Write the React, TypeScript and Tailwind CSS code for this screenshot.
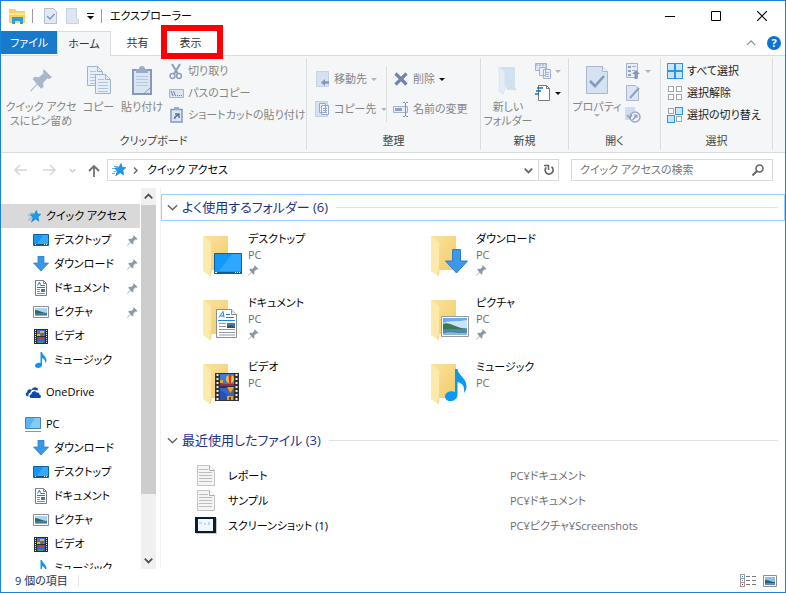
import React from "react";

type Kids = { children?: React.ReactNode };

function Svg({ w, h, crisp, children }: Kids & { w: number; h: number; crisp?: boolean }) {
  return (
    <svg
      width={w}
      height={h}
      viewBox={`0 0 ${w} ${h}`}
      fill="none"
      className="shrink-0"
      shapeRendering={crisp ? "crispEdges" : undefined}
      aria-hidden="true"
    >
      {children}
    </svg>
  );
}

/* ---------- small glyphs ---------- */

const Caret = ({ color = "#b4b4b4" }: { color?: string }) => (
  <Svg w={6} h={3}>
    <path d="M0 0h6L3 3z" fill={color} />
  </Svg>
);

const Chevron = ({ dir, color = "#606060", size = 11 }: { dir: "down" | "up" | "right"; color?: string; size?: number }) => (
  <svg width={size} height={size} viewBox="0 0 12 12" fill="none" stroke={color} strokeWidth={size < 10 ? 2.4 : 1.4} className="shrink-0" aria-hidden="true">
    <path d={dir === "down" ? "M1 3.500l5 5 5-5" : dir === "up" ? "M1 8.500l5-5 5 5" : "M3.500 1l5 5-5 5"} />
  </svg>
);

const Pin = ({ size = 11, color = "#8a98a3" }: { size?: number; color?: string }) => (
  <svg width={size} height={size} viewBox="0 0 22 22" fill={color} className="shrink-0" aria-hidden="true">
    <path d="M13 0l8 8-2.500 1.500-2-.5-4 4.500.5 3.500-2 2-4-4L1 21.500 0 21l6.500-7L2.500 9.500l2-2 4 .5 4.500-4-.5-1.500z" />
  </svg>
);

const Star = ({ s = 13 }: { s?: number }) => (
  <svg width={s} height={s} viewBox="0 0 14 14" className="shrink-0" aria-hidden="true">
    <path d="M2 3.500h4M0 5.500h3M1.500 8.500h3M0 10.500h3" stroke="#6bb3df" />
    <path d="M9 .5l1.200 3.700 3.600.5-3 2.600.9 4.700-3.400-2.300-4.600 3.100 1.700-4.500L2.800 5l4-.5z" fill="#1c9be8" stroke="#0c73bd" strokeWidth=".6" />
  </svg>
);

/* ---------- location icons ---------- */

function DesktopArt() {
  return (
    <>
      <path d="M.5.5h15v11H.5z" fill="#1496f5" stroke="#0b62a8" />
      <path d="M10 1h5v9H4z" fill="#35a9fb" />
      <path d="M1 10.500h14" stroke="#0b4f8c" />
      <path d="M2 10.500h1M11 10.500h1M13 10.500h1" stroke="#fff" />
    </>
  );
}
function DocArt() {
  return (
    <>
      <path d="M.5.5h8l3 3v12H.5z" fill="#fff" stroke="#777f86" />
      <path d="M8.500.5v3h3" stroke="#777f86" />
      <path d="M2.500 5.500L4.500 2l1 3.500M6 5.500h4M2 7.500h8" stroke="#1b83cf" />
      <path d="M2 9.500h3M2 11.500h3M2 13.500h8" stroke="#8a9299" />
      <path d="M6 9h4v3H6z" fill="#3c7daf" />
    </>
  );
}
function PictureArt() {
  return (
    <>
      <path d="M.5.5h15v11H.5z" fill="#fff" stroke="#8d8d8d" />
      <path d="M2 2h12v8H2z" fill="#a9d3f7" />
      <path d="M2 4c4 0 7 3 12 3v1H2z" fill="#31684f" />
      <path d="M2 7h12v3H2z" fill="#3e7aa3" />
      <path d="M2 9h12v1H2z" fill="#7fb0cf" />
    </>
  );
}
function VideoArt() {
  return (
    <>
      <path d="M0 0h14v15H0z" fill="#2b2b2b" />
      <path d="M3 1h8v6H3z" fill="#3d78dd" />
      <path d="M3 8h8v6H3z" fill="#3263c9" />
      <path d="M6 2h4v2H6zM3 5h3v2H3z" fill="#f0b429" />
      <path d="M7 4h2v2H7zM6 9h3v2H6z" fill="#d63a2c" />
      <path d="M4 12h5v2H4z" fill="#3f9c45" />
      <path d="M1.500 1v13M12.500 1v13" stroke="#e9e9e9" strokeDasharray="1 1" />
    </>
  );
}
const NOTE = "M5.500 0h1.500c.2 3 4.500 4.500 4.500 8.500-.2 1.500-.6 2.300-1.200 3 .3-2.500-.8-4.700-3.300-5.500v7c0 3.500-7 4-7 .8C0 11.500 3 10 5.500 11z";
const ARROW = "M5 0h6v7h4.500L8 15 .5 7H5z";

const icons: Record<string, React.ReactNode> = {
  desktop: <Svg w={16} h={12}><DesktopArt /></Svg>,
  download: <Svg w={16} h={16}><path d={ARROW} fill="#3c96e6" stroke="#2a78c4" strokeWidth=".7" /></Svg>,
  document: <Svg w={12} h={16}><DocArt /></Svg>,
  picture: <Svg w={16} h={12}><PictureArt /></Svg>,
  video: <Svg w={14} h={15}><VideoArt /></Svg>,
  music: <Svg w={12} h={16}><path d={NOTE} fill="#0d95f2" /></Svg>,
  star: <Star />,
  onedrive: (
    <Svg w={16} h={11}>
      <path d="M3.500 9.500C.5 9.500-.2 6.500 2 5.200 2.200 2.500 5 1.500 6.500 2.800 8-1 13-.5 13.200 3.200H10C7.500 2 5.500 4 5.500 5.500 3.500 6 3 8 3.500 9.500z" fill="#0a4aa8" />
      <path d="M6.500 11C4 11 3.800 7.500 6.500 7.200 6.500 4 10.500 3.300 11.700 5.700 13.500 5 14.800 6.500 14.400 7.800 16.500 8 16.500 11 14.400 11z" fill="#0a4aa8" />
    </Svg>
  ),
  pc: (
    <Svg w={16} h={16}>
      <path d="M.5 1.500h15v11H.5z" fill="#55b8f2" stroke="#4a86a8" />
      <path d="M10 2h5v10H4z" fill="#7fcdf8" />
      <path d="M0 15.500h16" stroke="#7e9bb0" />
    </Svg>
  ),
};

/* ---------- large folders ---------- */

const overlays: Record<string, React.ReactNode> = {
  desktop: (
    <>
      <path d="M12.500 19.500h27v20h-27z" fill="#1199fa" stroke="#0d5f9f" />
      <path d="M30 20h9v17H17z" fill="#2ea8fd" />
      <path d="M13 38.500h26" stroke="#0b5794" />
      <path d="M13 38.500h2M33 38.500h1M35 38.500h1M37 38.500h1" stroke="#fff" />
    </>
  ),
  download: <path d="M22.500 15.500h8V27h7L26.500 39 15.500 27h7z" fill="#3d98e8" stroke="#2c7ecb" />,
  document: (
    <>
      <path d="M14.500 11.500h15l5 5v23h-20z" fill="#fff" stroke="#8a8f94" />
      <path d="M29.500 11.500v5h5" fill="#e8e8e8" stroke="#8a8f94" />
      <path d="M17 19.500l4-6 1 6M18.500 18h3M24 16.500h4M24 19.500h8M16 22.500h17" stroke="#1b87d6" />
      <path d="M17 25.500h7M17 28.500h7M17 31.500h16M17 34.500h16M17 37h16" stroke="#93999f" />
      <path d="M25 25h8v5h-8z" fill="#3c7dae" />
      <path d="M25 28l4-1 4 2v1h-8z" fill="#2d5b4a" />
    </>
  ),
  picture: (
    <>
      <path d="M11.500 18.500h27v20h-27z" fill="#fff" stroke="#999" />
      <path d="M13 20h24v17H13z" fill="#69abf5" />
      <path d="M13 25c8-3 14-1 24-3v8H13z" fill="#cde5fa" />
      <path d="M13 26c6-3 12 4 24 5v1H13z" fill="#3c7853" />
      <path d="M13 31h24v6H13z" fill="#4987ae" />
      <path d="M13 35.500c8-3 15 1 24-1V37H13z" fill="#8bb9d4" />
    </>
  ),
  video: (
    <>
      <path d="M13 11h24v28H13z" fill="#333" />
      <path d="M18 12h14v12H18z" fill="#3d7be0" />
      <path d="M18 26h14v12H18z" fill="#2f66cf" />
      <circle cx="28" cy="17" r="4" fill="#f4c22b" />
      <path d="M26.500 13h3l-.5 8h-2zM28 26l4 4h-7z" fill="#d8352a" />
      <path d="M25 25h7l-3.500 6zM25 34h6v4h-6zM18 18h3v3h-3z" fill="#e9a52b" />
      <path d="M18 21l5 1 9 0v2H18zM27 35h2v3h-2z" fill="#8b2f5c" />
      <path d="M18 29c3-1 4 3 7 3v6h-7z" fill="#2751b5" />
      <path d="M15.500 12v26M34.500 12v26" stroke="#f0f0f0" strokeWidth="2" strokeDasharray="2 2" />
    </>
  ),
  music: <path d="M25 7h2.500c.5 6 9 9 9 17 0 3-.8 5-2.500 7 1-7-2-10-6.500-11v13c0 7-12.500 8.500-12.500 1.500 0-4 5.500-6.500 10-4.500z" fill="#0a99f5" />,
};

function FolderIcon({ kind }: { kind: string }) {
  return (
    <Svg w={42} h={44}>
      <defs>
        <linearGradient id={"fb" + kind} x1="0" y1="0" x2="1" y2="1">
          <stop offset="0" stopColor="#fbe3a0" />
          <stop offset="1" stopColor="#f1cb68" />
        </linearGradient>
      </defs>
      <path d="M1 2h25v34H9z" fill={`url(#fb${kind})`} />
      <path d="M1 2l8 6v30l-1 4-7-5z" fill="#fde9a9" />
      <path d="M8 42l1-4v-3" stroke="#f3d688" />
      {overlays[kind]}
    </Svg>
  );
}

/* ---------- ribbon drawings ---------- */

const PageBig = ({ check }: { check?: boolean }) => (
  <Svg w={22} h={28}>
    <path d="M.5.5h16l5 5v22H.5z" fill="#d5e2f1" stroke="#a9b8d0" />
    <path d="M16.500.5v5h5" fill="#eef3f9" stroke="#a9b8d0" />
    {check && <path d="M4 15l5 5 9-10" stroke="#8499bd" strokeWidth="2.600" />}
  </Svg>
);
const CopyBig = () => (
  <Svg w={24} h={28}>
    {[[0, 0], [8, 8]].map(([x, y]) => (
      <g key={x} transform={`translate(${x} ${y})`}>
        <path d="M.5.5h10l5 5v14H.5z" fill="#e6eef7" stroke="#a3b2cb" />
        <path d="M10.500.5v5h5" stroke="#a3b2cb" />
        <path d="M3 5.500h6M3 8.500h10M3 11.500h10M3 14.500h10M3 17.500h10" stroke="#b5c2d7" />
      </g>
    ))}
  </Svg>
);
const PasteBig = () => (
  <Svg w={20} h={29}>
    <path d="M1 4h18v24H1z" fill="#d9e5f2" stroke="#8799bb" strokeWidth="2" />
    <path d="M4 3h3c0-4 6-4 6 0h3v4H4z" fill="#9aabc9" />
    <path d="M4 10.500h12M4 13.500h12M4 16.500h12M4 19.500h12" stroke="#b9c7db" />
    <path d="M12 27.500l6.500-6" stroke="#8799bb" />
  </Svg>
);
const NewFolderBig = () => (
  <Svg w={20} h={27}>
    <path d="M1 0h16v20l2 3H9z" fill="#d3e0ee" />
    <path d="M1 0l6 4v18l-2 5-4-3z" fill="#e4edf6" stroke="#cad8e8" strokeWidth=".5" />
  </Svg>
);
const Scissors = () => (
  <Svg w={14} h={17}>
    <path d="M3 1l6 10M11 1L5 11" stroke="#8c9dbb" strokeWidth="2" />
    <circle cx="3.500" cy="13" r="2.400" stroke="#8c9dbb" strokeWidth="1.500" />
    <circle cx="10" cy="13" r="2.400" stroke="#8c9dbb" strokeWidth="1.500" />
  </Svg>
);
const PathIcon = () => (
  <Svg w={15} h={9}>
    <path d="M.5.5h14v8H.5z" fill="#dbe6f2" stroke="#a6b4cd" />
    <path d="M2 2l2 5M4.500 2l2 5M8 6.500h1M10 6.500h1M12 6.500h1" stroke="#6d7fa3" />
  </Svg>
);
const ShortcutIcon = () => (
  <Svg w={13} h={16}>
    <path d="M1 2.500h11V15H1z" fill="#dce7f3" stroke="#8799bb" strokeWidth="1.500" />
    <path d="M4 0h5v3H4z" fill="#9aabc9" />
    <path d="M4.500 12c0-2 1-3 3.500-4M5 7h4v4" stroke="#5f7399" strokeWidth="1.500" />
  </Svg>
);
const MoveIcon = () => (
  <Svg w={13} h={16}>
    <path d="M.5.5h12v15H.5z" fill="#d5e2f1" stroke="#c2d1e4" />
    <path d="M13 11.500H8" stroke="#8294b8" strokeWidth="2.400" />
    <path d="M5 11.500L9 8v7z" fill="#8294b8" />
  </Svg>
);
const CopyToIcon = () => (
  <Svg w={14} h={16}>
    <path d="M.5.5h12v15H.5z" fill="#d5e2f1" stroke="#c2d1e4" />
    <path d="M4.500 2.500h6v9h-6zM6.500 4.500h7v9h-7z" fill="#eff4fa" stroke="#97a8c7" />
    <path d="M8 7.500h4M8 9.500h4M8 11.500h4" stroke="#97a8c7" />
  </Svg>
);
const DeleteIcon = () => (
  <Svg w={14} h={14}>
    <path d="M1.500 1.500L12.500 12.500M12.500 1.500L1.500 12.500" stroke="#7286ac" strokeWidth="3.200" />
  </Svg>
);
const RenameIcon = () => (
  <Svg w={16} h={15}>
    <path d="M.5 4.500h14v6H.5z" fill="#e9eff7" stroke="#a3b2cb" />
    <path d="M2 6h7v3H2z" fill="#8fa2c3" />
    <path d="M12.500 1v13M10 .5h2M13 .5h2M10 14.500h2M13 14.500h2" stroke="#7d90b4" />
  </Svg>
);
const EasyAccessIcon = () => (
  <Svg w={16} h={16}>
    <path d="M.5.5h11v7H.5z" fill="#dbe6f2" stroke="#a3b2cb" />
    <path d="M1 2h10" stroke="#8fa2c3" strokeDasharray="2 1" />
    <path d="M4.500 4.500h6v8h-6zM8.500 6.500h7v9h-7z" fill="#e9f0f8" stroke="#a3b2cb" />
    <path d="M10 9.500h4M10 11.500h4M10 13.500h4" stroke="#a9b8d0" />
  </Svg>
);
const NewItemIcon = () => (
  <Svg w={16} h={16}>
    <path d="M3.500.5h8l3 3v12h-11z" fill="#fff" stroke="#777" />
    <path d="M11.500.5v3h3" stroke="#777" />
    <path d="M2 3h6M1 6h5M0 9h4" stroke="#1d6fb8" strokeWidth="1.500" />
  </Svg>
);
const OpenIcon = () => (
  <Svg w={14} h={16}>
    <path d="M.5.5h11v14H.5z" fill="#e7eef7" stroke="#a3b2cb" />
    <path d="M2 3h3v2H2zM2 7h3v2H2zM2 11h3v2H2z" fill="#8fa2c3" />
    <path d="M6 3.500h4M6 7.500h3" stroke="#a3b2cb" />
    <path d="M10 7l4 4h-2.500v5h-3v-5H6z" fill="#8598bb" />
  </Svg>
);
const EditIcon = () => (
  <Svg w={14} h={16}>
    <path d="M.5.5h9l3 3v12H.5z" fill="#dbe6f2" stroke="#a9b8d0" />
    <path d="M4 13l9-10" stroke="#8ea1c2" strokeWidth="2" />
  </Svg>
);
const HistoryIcon = () => (
  <Svg w={16} h={16}>
    <path d="M0 0h10v13H0z" fill="#cfdeee" />
    <circle cx="10" cy="10" r="5" fill="#edf2f8" stroke="#9aa9c3" strokeWidth="1.500" />
    <path d="M2 8l2.500 3L7 8M10 7v3h3M7.500 13l5-5" stroke="#8b9bb8" strokeWidth="1.200" />
  </Svg>
);

function SelectIcon({ on }: { on: boolean[] }) {
  return (
    <Svg w={16} h={16} crisp>
      {on.map((v, i) => {
        const x = (i % 2) * 8, y = i > 1 ? 8 : 0;
        return v ? (
          <g key={i}>
            <path d={`M${x} ${y}h8v8h-8z`} fill="#2d95e6" />
            <path d={`M${x + 1} ${y + 1}h6v6h-6z`} fill="#c6e6fb" />
          </g>
        ) : (
          <path key={i} d={`M${x + 1.5} ${y + 1.5}h5v5h-5z`} fill="#fff" stroke="#a5a5a5" />
        );
      })}
    </Svg>
  );
}

/* ---------- ribbon building blocks ---------- */

function Group({ label, className, children }: Kids & { label: string; className: string }) {
  return (
    <section className={"my-0.5 flex shrink-0 flex-col border-r border-[#dcdddf] " + className}>
      <div className="flex flex-1 items-start">{children}</div>
      <h2 className="h-[17px] text-center leading-4 text-[#444]">{label}</h2>
    </section>
  );
}

function Big({ icon, className, caret, children }: Kids & { icon: React.ReactNode; className: string; caret?: boolean }) {
  return (
    <button className={"flex shrink-0 flex-col items-center pt-1.5 leading-[14px] whitespace-nowrap text-[#858585] " + className}>
      <span className="mb-1 flex h-8 items-center">{icon}</span>
      {children}
      {caret && <Caret />}
    </button>
  );
}

function Small({ icon, dark, caret, label, name }: { icon: React.ReactNode; dark?: boolean; caret?: string; label?: string; name?: string }) {
  return (
    <button
      aria-label={name}
      className={"flex h-[22px] items-center gap-1 whitespace-nowrap " + (dark ? "text-[#222]" : "text-[#858585]")}
    >
      <span className="flex w-4 shrink-0 justify-center">{icon}</span>
      {label}
      {caret && <Caret color={caret} />}
    </button>
  );
}

/* ---------- data ---------- */

type Row = { icon: string; label: string; depth: 0 | 1; pin?: boolean; selected?: boolean; gap?: boolean };
const tree: Row[] = [
  { icon: "star", label: "クイック アクセス", depth: 0, selected: true },
  { icon: "desktop", label: "デスクトップ", depth: 1, pin: true },
  { icon: "download", label: "ダウンロード", depth: 1, pin: true },
  { icon: "document", label: "ドキュメント", depth: 1, pin: true },
  { icon: "picture", label: "ピクチャ", depth: 1, pin: true },
  { icon: "video", label: "ビデオ", depth: 1 },
  { icon: "music", label: "ミュージック", depth: 1 },
  { icon: "onedrive", label: "OneDrive", depth: 0, gap: true },
  { icon: "pc", label: "PC", depth: 0, gap: true },
  { icon: "download", label: "ダウンロード", depth: 1 },
  { icon: "desktop", label: "デスクトップ", depth: 1 },
  { icon: "document", label: "ドキュメント", depth: 1 },
  { icon: "picture", label: "ピクチャ", depth: 1 },
  { icon: "video", label: "ビデオ", depth: 1 },
  { icon: "music", label: "ミュージック", depth: 1 },
];

const folders = [
  { kind: "desktop", name: "デスクトップ", pin: true },
  { kind: "download", name: "ダウンロード", pin: true },
  { kind: "document", name: "ドキュメント", pin: true },
  { kind: "picture", name: "ピクチャ", pin: true },
  { kind: "video", name: "ビデオ", pin: false },
  { kind: "music", name: "ミュージック", pin: false },
];

const TextFile = () => (
  <Svg w={18} h={21}>
    <path d="M.5.5h12l5 5v15H.5z" fill="#f4f4f4" stroke="#c4c4c4" />
    <path d="M12.500.5v5h5" fill="#fff" stroke="#a9a9a9" />
    <path d="M2 4.500h9M2 7.500h13M2 10.500h13M2 13.500h13M2 16.500h13" stroke="#bdbdbd" />
  </Svg>
);
const ShotFile = () => (
  <Svg w={22} h={17}>
    <path d="M1 1h21v16H1z" fill="#c9c9c9" />
    <path d="M0 0h21v16H0z" fill="#0b1c33" />
    <path d="M3 2h15v12H3z" fill="#f1f6fa" />
    <path d="M4 5h3v2H4zM9 6h2v2H9zM13 5h2v3h-2z" fill="#c0dbee" />
  </Svg>
);
const files = [
  { icon: <TextFile />, name: "レポート", path: "PC¥ドキュメント" },
  { icon: <TextFile />, name: "サンプル", path: "PC¥ドキュメント" },
  { icon: <ShotFile />, name: "スクリーンショット (1)", path: "PC¥ピクチャ¥Screenshots" },
];

function SectionHead({ active, children }: Kids & { active?: boolean }) {
  return (
    <button
      className={
        "flex h-[27px] w-full items-center gap-1 border pr-1.5 pb-px pl-[5px] text-[13px] leading-5 text-[#1e3287] " +
        (active ? "border-[#99d1ff]" : "border-transparent")
      }
    >
      <Chevron dir="down" />
      <span className="whitespace-nowrap">{children}</span>
      <span className="ml-1 h-px flex-1 bg-[#e2e2e2]" />
    </button>
  );
}

/* ---------- window ---------- */

export default function App() {
  return (
    <div className="flex h-screen flex-col overflow-hidden border border-[#1883d7] bg-white font-['Open_Sans','Noto_Sans_CJK_JP',sans-serif] text-[11px] leading-4 text-black [font-feature-settings:'palt']">
      <header className="flex h-[30px] shrink-0 items-center pl-2">
        <Svg w={17} h={16}>
          <path d="M0 1h6l2 2h8v12H0z" fill="#f6d063" />
          <path d="M0 5h16v2H0z" fill="#fce59a" />
          <path d="M3 16V9h11v7h-3v-3H6v3z" fill="#2fa0dc" />
        </Svg>
        <span className="ml-1.5 h-3.5 w-px bg-[#9a9a9a]" />
        <button aria-label="プロパティ" className="ml-[11px]">
          <Svg w={13} h={16}>
            <path d="M.5.5h9l3 3v12H.5z" fill="#e1eaf4" stroke="#b3c0d4" />
            <path d="M3 8l3 3 4.500-5" stroke="#8295b8" strokeWidth="1.500" />
          </Svg>
        </button>
        <button aria-label="新しいフォルダー" className="ml-[9px]">
          <Svg w={13} h={16}>
            <path d="M.5.5h10v10l2 1v4H.5z" fill="#dce7f3" stroke="#c5d3e5" />
          </Svg>
        </button>
        <button aria-label="クイック アクセス ツール バーのカスタマイズ" className="ml-2">
          <Svg w={8} h={7}>
            <path d="M0 .5h7" stroke="#111" />
            <path d="M0 3h7L3.500 6.500z" fill="#111" />
          </Svg>
        </button>
        <span className="ml-1.5 h-3.5 w-px bg-[#9a9a9a]" />
        <h1 className="ml-2">エクスプローラー</h1>
        <div className="ml-auto flex self-stretch">
          <button aria-label="最小化" className="flex w-[46px] items-center justify-center">
            <Svg w={10} h={10}><path d="M0 5.500h10" stroke="#000" /></Svg>
          </button>
          <button aria-label="最大化" className="flex w-[46px] items-center justify-center">
            <Svg w={10} h={10}><path d="M.5.5h9v9h-9z" stroke="#000" /></Svg>
          </button>
          <button aria-label="閉じる" className="flex w-[46px] items-center justify-center">
            <Svg w={10} h={10}><path d="M0 0l10 10M10 0L0 10" stroke="#000" strokeWidth="1.200" /></Svg>
          </button>
        </div>
      </header>

      <nav className="flex h-[25px] shrink-0 items-stretch border-b border-[#dadbdc] text-[#333]">
        <button className="mb-px w-14 bg-[#1979ca] text-white">ファイル</button>
        <button className="-mb-px w-[54px] border border-b-0 border-[#dadbdc] bg-[#f5f6f7]">ホーム</button>
        <button className="w-[53px]">共有</button>
        <button className="relative w-[53px]">
          表示
          <span className="absolute -top-1.5 -right-1.5 -bottom-1 -left-[3px] z-10 border-[6px] border-[#f00]" />
        </button>
        <button aria-label="リボンの最小化" className="ml-auto flex w-5 items-center justify-center">
          <Chevron dir="up" color="#8a8a8a" size={10} />
        </button>
        <button className="mr-1 ml-1.5 h-3.5 w-3.5 self-center rounded-full bg-[#0a74d1] leading-[14px] font-bold text-white">?</button>
      </nav>

      <div className="flex h-[97px] shrink-0 border-b border-[#dadbdc] bg-[#f5f6f7]">
        <Group label="クリップボード" className="w-[306px]">
          <Big icon={<Pin size={23} color="#aab7ca" />} className="ml-1 w-[72px]">
            <span>クイック アクセ</span>
            <span>スにピン留め</span>
          </Big>
          <Big icon={<CopyBig />} className="w-[43px]">コピー</Big>
          <Big icon={<PasteBig />} className="w-11">貼り付け</Big>
          <div className="ml-1 flex flex-col pt-0.5">
            <Small icon={<Scissors />} label="切り取り" />
            <Small icon={<PathIcon />} label="パスのコピー" />
            <Small icon={<ShortcutIcon />} label="ショートカットの貼り付け" />
          </div>
        </Group>
        <Group label="整理" className="w-[174px]">
          <div className="mt-2 ml-[7px] flex w-[72px] shrink-0 flex-col gap-2 pt-0.5">
            <Small icon={<MoveIcon />} label="移動先" caret="#b4b4b4" />
            <Small icon={<CopyToIcon />} label="コピー先" caret="#b4b4b4" />
          </div>
          <div className="mt-2 flex h-14 flex-col gap-2 border-l border-[#dcdddf] pt-0.5 pl-1.5">
            <Small icon={<DeleteIcon />} label="削除" caret="#111" />
            <Small icon={<RenameIcon />} label="名前の変更" />
          </div>
        </Group>
        <Group label="新規" className="w-[88px]">
          <Big icon={<NewFolderBig />} className="ml-0.5 w-[50px]">
            <span>新しい</span>
            <span>フォルダー</span>
          </Big>
          <div className="ml-0.5 flex flex-col pt-0.5">
            <Small icon={<EasyAccessIcon />} name="ショートカット" caret="#b4b4b4" />
            <Small icon={<NewItemIcon />} name="新しいアイテム" caret="#111" />
          </div>
        </Group>
        <Group label="開く" className="w-[92px]">
          <Big icon={<PageBig check />} className="ml-1 w-12" caret>プロパティ</Big>
          <div className="ml-1 flex flex-col pt-0.5">
            <Small icon={<OpenIcon />} name="開く" caret="#b4b4b4" />
            <Small icon={<EditIcon />} name="編集" />
            <Small icon={<HistoryIcon />} name="履歴" />
          </div>
        </Group>
        <Group label="選択" className="w-28">
          <div className="ml-1.5 flex flex-col pt-0.5">
            <Small dark icon={<SelectIcon on={[true, true, true, true]} />} label="すべて選択" />
            <Small dark icon={<SelectIcon on={[false, false, false, false]} />} label="選択解除" />
            <Small dark icon={<SelectIcon on={[false, true, true, false]} />} label="選択の切り替え" />
          </div>
        </Group>
      </div>

      <div className="flex shrink-0 items-center py-1.5 pr-3 pl-3">
        <button aria-label="戻る">
          <Svg w={14} h={12}><path d="M14 6H2M7 1L2 6l5 5" stroke="#d6d6d6" strokeWidth="1.500" /></Svg>
        </button>
        <button aria-label="進む" className="ml-4">
          <Svg w={14} h={12}><path d="M0 6h12M7 1l5 5-5 5" stroke="#d6d6d6" strokeWidth="1.500" /></Svg>
        </button>
        <button aria-label="最近表示した場所" className="ml-3">
          <Chevron dir="down" color="#cfcfcf" size={7} />
        </button>
        <button aria-label="上へ" className="ml-3">
          <Svg w={12} h={13}><path d="M6 13V2M1 7l5-5 5 5" stroke="#707070" strokeWidth="1.800" /></Svg>
        </button>
        <div className="ml-[7px] flex h-[22px] flex-1 items-center border border-[#d9d9d9] pl-1">
          <Star s={14} />
          <span className="ml-1.5"><Chevron dir="right" color="#666" size={7} /></span>
          <button className="ml-2">クイック アクセス</button>
          <button aria-label="以前の場所" className="mr-0.5 ml-auto flex w-4 justify-center">
            <Chevron dir="down" color="#666" size={9} />
          </button>
          <button aria-label="更新" className="flex w-5 items-center justify-center self-stretch border-l border-[#d9d9d9]">
            <Svg w={12} h={12}>
              <path d="M8.500 2.800A4 4 0 1 1 3.200 3.300" stroke="#666" strokeWidth="1.700" />
              <path d="M1 1.500h4.500V6" stroke="#666" strokeWidth="1.500" />
            </Svg>
          </button>
        </div>
        <div className="ml-3 flex h-[22px] w-[202px] items-center border border-[#d9d9d9] pr-2 pl-2">
          <input aria-label="クイック アクセスの検索" placeholder="クイック アクセスの検索" className="min-w-0 flex-1 bg-transparent outline-none placeholder:text-[#767676]" />
          <button aria-label="検索">
            <Svg w={12} h={12}>
              <circle cx="7.500" cy="4.500" r="3.500" stroke="#666" strokeWidth="1.600" />
              <path d="M5 7l-4.500 4.500" stroke="#666" strokeWidth="2" />
            </Svg>
          </button>
        </div>
      </div>

      <div className="flex min-h-0 flex-1 pt-px">
        <aside className="flex w-40 shrink-0 border-r border-[#f0f0f0]">
          <ul className="min-w-0 flex-1 overflow-hidden pt-4">
            {tree.map((r, i) => (
              <li key={i} className={r.gap ? "mt-2" : ""}>
                <button
                  className={
                    "flex h-6 w-full items-center gap-[5px] pr-0.5 text-left whitespace-nowrap " +
                    (r.depth ? "pl-8 " : "pl-6 ") +
                    (r.selected ? "bg-[#d9d9d9]" : "")
                  }
                >
                  <span className={"flex w-4 shrink-0 " + (r.icon === "star" ? "justify-end" : "justify-center")}>{icons[r.icon]}</span>
                  <span className="flex-1">{r.label}</span>
                  {r.pin && <Pin />}
                </button>
              </li>
            ))}
          </ul>
          <div className="mr-1 ml-px flex w-[15px] flex-col bg-[#f0f0f0]">
            <button aria-label="上へスクロール" className="flex h-[17px] shrink-0 items-center justify-center">
              <Chevron dir="up" color="#505050" size={9} />
            </button>
            <div className="flex-1"><div className="h-5/6 bg-[#cdcdcd]" /></div>
            <button aria-label="下へスクロール" className="flex h-[17px] shrink-0 items-center justify-center">
              <Chevron dir="down" color="#505050" size={9} />
            </button>
          </div>
        </aside>

        <main className="min-w-0 flex-1 overflow-hidden pt-1.5">
          <SectionHead active>よく使用するフォルダー (6)</SectionHead>
          <ul className="mt-2.5 ml-[41px] grid grid-cols-[repeat(auto-fill,228px)]">
            {folders.map((f) => (
              <li key={f.kind} className="flex h-16 items-start gap-1">
                <span className="pt-[3px]"><FolderIcon kind={f.kind} /></span>
                <div className="flex flex-col">
                  <span>{f.name}</span>
                  <span className="mb-0.5 text-[#6d6d6d]">PC</span>
                  {f.pin && <Pin />}
                </div>
              </li>
            ))}
          </ul>
          <div className="mt-1">
            <SectionHead>最近使用したファイル (3)</SectionHead>
          </div>
          <table className="mt-[9px] w-full table-fixed text-left">
            <tbody>
              {files.map((f) => (
                <tr key={f.name} className="h-[25px]">
                  <td className="w-[349px] p-0">
                    <span className="flex items-center gap-[11px] pl-[34px]">
                      <span className="flex w-[22px] justify-center">{f.icon}</span>
                      {f.name}
                    </span>
                  </td>
                  <td className="p-0 text-[#6d6d6d]">{f.path}</td>
                </tr>
              ))}
            </tbody>
          </table>
        </main>
      </div>

      <footer className="flex h-[23px] shrink-0 items-center pr-2 pl-3.5 text-[#1e3250]">
        <span>9 個の項目</span>
        <span className="ml-2.5 h-3 w-px bg-[#e4e4e4]" />
        <button aria-label="詳細" className="ml-auto">
          <Svg w={17} h={13} crisp>
            <path d="M.5.5h4v4h-4zM.5 4.500h4v4h-4zM.5 8.500h4v4h-4z" stroke="#9a9a9a" />
            <path d="M6 2.500h4M12 2.500h4M6 6.500h4M12 6.500h4M6 10.500h4M12 10.500h4" stroke="#777" />
            <path d="M2 2h1v1H2zM2 6h1v1H2z" fill="#2c7ac0" />
            <path d="M2 10h1v1H2z" fill="#c22" />
          </Svg>
        </button>
        <button aria-label="大アイコン" className="ml-1.5">
          <Svg w={14} h={12}>
            <path d="M.5.5h13v11H.5z" fill="#fff" stroke="#8d8d8d" />
            <path d="M2 2h10v8H2z" fill="#8cc0f3" />
            <path d="M2 5c4 0 6 2 10 2v3H2z" fill="#2c5f6d" />
            <path d="M2 8h10v2H2z" fill="#4e90bd" />
          </Svg>
        </button>
      </footer>
    </div>
  );
}
